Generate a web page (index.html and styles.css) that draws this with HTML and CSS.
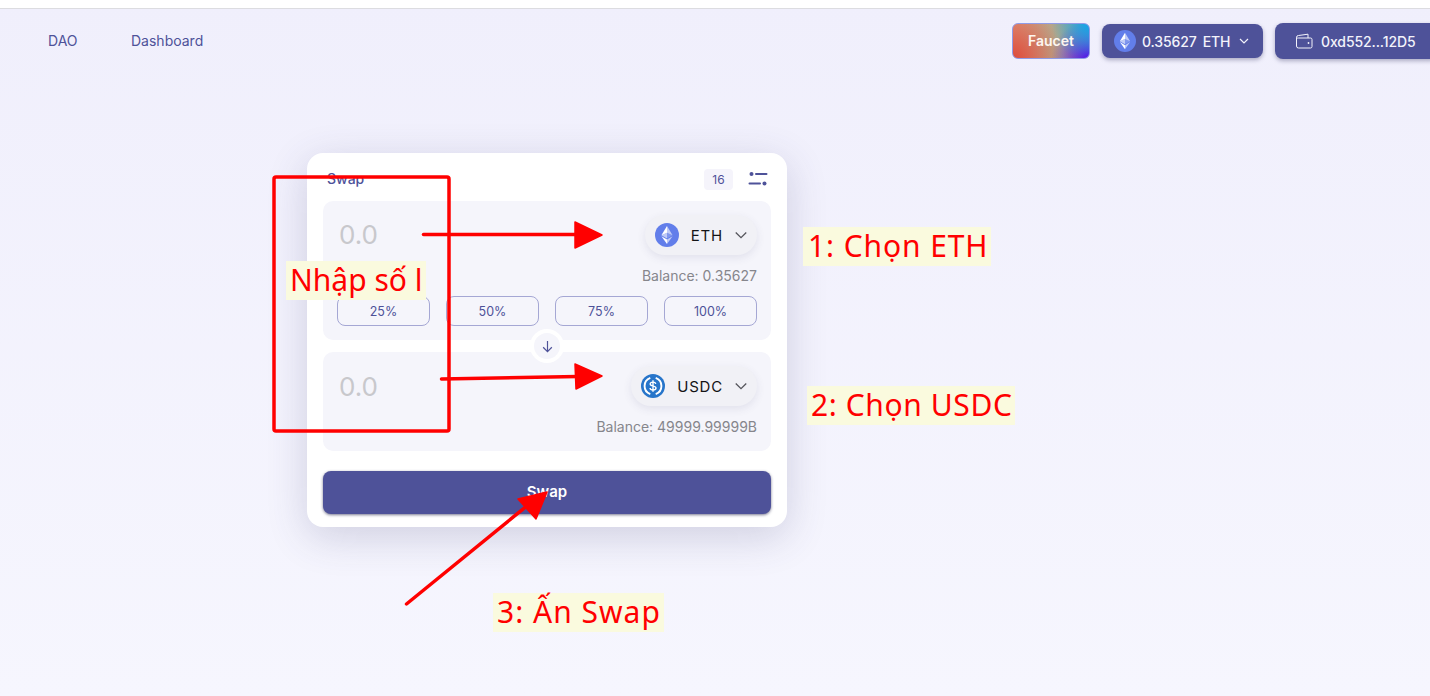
FILE: index.html
```html
<!DOCTYPE html>
<html lang="vi">
<head>
  <meta charset="UTF-8">
  <meta name="viewport" content="width=device-width, initial-scale=1.0">
  <title>Swap</title>
  <link rel="stylesheet" href="styles.css">
</head>
<body>
  <div class="top-strip"></div>
  <header class="topbar">
    <nav class="nav-links">
      <a href="#">DAO</a>
      <a href="#">Dashboard</a>
    </nav>
    <div class="nav-actions">
      <button class="faucet-btn">Faucet</button>
      <button class="balance-btn">
        <svg class="token-icon-sm" viewBox="0 0 24 24"><circle cx="12" cy="12" r="12" fill="#627eea"/><path d="M12 3v6.700l5.600 2.500z" fill="#fff" fill-opacity=".6"/><path d="M12 3L6.400 12.200l5.600-2.500z" fill="#fff"/><path d="M12 16.600V21l5.600-7.800z" fill="#fff" fill-opacity=".6"/><path d="M12 16.600V21l-5.600-7.800z" fill="#fff"/><path d="M12 15.600l5.600-3.400L12 9.700z" fill="#fff" fill-opacity=".2"/><path d="M6.400 12.200l5.600 3.400V9.700z" fill="#fff" fill-opacity=".6"/></svg>
        <span>0.35627</span><span>ETH</span>
        <svg class="chev" viewBox="0 0 12 12"><path d="M2 4l4 4 4-4" fill="none" stroke="currentColor" stroke-width="1.200"/></svg>
      </button>
      <button class="wallet-btn">
        <svg class="wallet-icon" viewBox="0 0 18 16"><path d="M1.500 4.500V13a2 2 0 0 0 2 2h12a1.500 1.500 0 0 0 1.500-1.500v-7A1.500 1.500 0 0 0 15.500 5H3.500a2 2 0 0 1-2-.5zm0 0A2 2 0 0 1 3.500 2.500L13 1.200V5" fill="none" stroke="currentColor" stroke-width="1"/><circle cx="13.500" cy="10" r=".9" fill="currentColor"/></svg>
        <span>0xd552...12D5</span>
      </button>
    </div>
  </header>

  <main class="swap-card">
    <div class="card-head">
      <span class="card-title">Swap</span>
      <div class="card-tools">
        <span class="slippage">16</span>
        <svg class="settings-icon" viewBox="0 0 20 16"><circle cx="3.500" cy="3" r="2" fill="currentColor"/><path d="M8 3h10.500M1.500 12.500H12" stroke="currentColor" stroke-width="2" stroke-linecap="round"/><circle cx="16.500" cy="12.500" r="2" fill="currentColor"/></svg>
      </div>
    </div>

    <section class="panel panel-from">
      <div class="panel-row">
        <span class="amount">0.0</span>
        <button class="token-btn token-eth">
          <svg class="token-icon" viewBox="0 0 24 24"><circle cx="12" cy="12" r="12" fill="#627eea"/><path d="M12 3v6.700l5.600 2.500z" fill="#fff" fill-opacity=".6"/><path d="M12 3L6.400 12.200l5.600-2.500z" fill="#fff"/><path d="M12 16.600V21l5.600-7.800z" fill="#fff" fill-opacity=".6"/><path d="M12 16.600V21l-5.600-7.800z" fill="#fff"/><path d="M12 15.600l5.600-3.400L12 9.700z" fill="#fff" fill-opacity=".2"/><path d="M6.400 12.200l5.600 3.400V9.700z" fill="#fff" fill-opacity=".6"/></svg>
          <span>ETH</span>
          <svg class="chev" viewBox="0 0 12 12"><path d="M1.500 3.800L6 8.300l4.500-4.500" fill="none" stroke="currentColor" stroke-width="1.100"/></svg>
        </button>
      </div>
      <p class="balance">Balance: 0.35627</p>
      <div class="percent-row">
        <button>25%</button>
        <button>50%</button>
        <button>75%</button>
        <button>100%</button>
      </div>
    </section>

    <div class="flip-wrap">
      <span class="flip-btn">
        <svg viewBox="0 0 12 12"><path d="M6 1v9.500M2 6.700l4 4 4-4" fill="none" stroke="currentColor" stroke-width="1.100"/></svg>
      </span>
    </div>

    <section class="panel panel-to">
      <div class="panel-row">
        <span class="amount">0.0</span>
        <button class="token-btn token-usdc">
          <svg class="token-icon" viewBox="0 0 24 24"><circle cx="12" cy="12" r="12" fill="#2775ca"/><path d="M9.300 3.900a8.600 8.600 0 0 0 0 16.200M14.700 3.900a8.600 8.600 0 0 1 0 16.200" fill="none" stroke="#fff" stroke-width="1.900"/><path d="M14.800 9.900c-.3-1.200-1.300-1.800-2.800-1.800-1.600 0-2.800.8-2.800 2 0 2.900 5.800 1.300 5.800 3.900 0 1.200-1.300 2-3 2s-2.800-.7-3-2M12 6.300v11.400" fill="none" stroke="#fff" stroke-width="1.400"/></svg>
          <span>USDC</span>
          <svg class="chev" viewBox="0 0 12 12"><path d="M1.500 3.800L6 8.300l4.500-4.500" fill="none" stroke="currentColor" stroke-width="1.100"/></svg>
        </button>
      </div>
      <p class="balance">Balance: 49999.99999B</p>
    </section>

    <button class="swap-btn">Swap</button>
  </main>

  <!-- red notes drawn on top of the screenshot -->
  <svg class="marks" viewBox="0 0 1430 696">
    <rect x="274" y="177" width="175" height="254" rx="2" fill="none" stroke="#f00" stroke-width="3.500"/>
    <path d="M423.500 234.500H578" stroke="#f00" stroke-width="3.500" stroke-linecap="round"/>
    <path d="M575 222l27 13-27 13z" fill="#f00" stroke="#f00" stroke-width="1.500" stroke-linejoin="round"/>
    <path d="M441.500 379L578 376.500" stroke="#f00" stroke-width="3.500" stroke-linecap="round"/>
    <path d="M575 364l27 12-26 13z" fill="#f00" stroke="#f00" stroke-width="1.500" stroke-linejoin="round"/>
    <path d="M406.500 604L528 505" stroke="#f00" stroke-width="3.500" stroke-linecap="round"/>
    <path d="M547 492l-11 27-18-20z" fill="#f00" stroke="#f00" stroke-width="1.500" stroke-linejoin="round"/>
  </svg>
  <span class="note note-amount">Nhập số l</span>
  <span class="note note-eth">1: Chọn ETH</span>
  <span class="note note-usdc">2: Chọn USDC</span>
  <span class="note note-swap">3: Ấn Swap</span>
</body>
</html>
```
FILE: styles.css
```css
* {
  box-sizing: border-box;
}
html, body {
  height: 100%;
}
body {
  margin: 0;
  position: relative;
  overflow: hidden;
  font-family: Inter, 'Noto Sans', sans-serif;
  background: linear-gradient(to bottom, #f0effc, #f6f6fe);
  color: #4e5299;
}
button {
  font-family: inherit;
  border: none;
  cursor: pointer;
}
.top-strip {
  height: 9px;
  background: #fff;
  border-bottom: 1px solid #dcdce0;
}
.topbar {
  display: flex;
  align-items: center;
  justify-content: space-between;
  height: 36px;
  margin: 14px -8px 0 0;
  padding-left: 48px;
}
.nav-links {
  display: flex;
  gap: 53.500px;
  padding-bottom: 2px;
}
.nav-links a {
  font-size: 14px;
  color: #4e5299;
  text-decoration: none;
}
.nav-actions {
  display: flex;
  align-items: center;
  gap: 12px;
}
.faucet-btn {
  width: 78px;
  height: 36px;
  padding-bottom: 2px;
  border-radius: 6px;
  border: 1px solid #8f9be8;
  color: #fdf6f0;
  font-size: 14px;
  font-weight: 600;
  background:
    radial-gradient(circle at 100% 0, #0ea5ea 0, rgba(14,165,234,0) 45%),
    radial-gradient(circle at 100% 100%, #5a00ea 0, rgba(90,0,234,0) 45%),
    radial-gradient(circle at 0 100%, #dd4c3c 0, rgba(221,76,60,0) 60%),
    linear-gradient(90deg, #df9478, #b0a88c 60%, #8fa7a0);
}
.balance-btn, .wallet-btn {
  display: flex;
  align-items: center;
  background: #4e5299;
  color: #f3f3fb;
  font-size: 14px;
  font-weight: 500;
  border-radius: 8px;
  box-shadow: 0 2px 4px rgba(40,40,90,0.35);
}
.balance-btn {
  width: 161px;
  height: 34px;
  padding: 0 0 0 12px;
  gap: 6px;
}
.balance-btn span, .wallet-btn span {
  letter-spacing: -0.1px;
}
.token-icon-sm {
  width: 22px;
  height: 22px;
}
.balance-btn .chev {
  width: 12px;
  height: 12px;
  margin-left: 2px;
}
.wallet-btn {
  width: 163px;
  height: 36px;
  padding: 0 0 0 20px;
  gap: 8px;
}
.wallet-icon {
  width: 18px;
  height: 16px;
}
.swap-card {
  width: 480px;
  height: 374px;
  margin: 94px 0 0 307px;
  padding: 16px;
  background: #fff;
  border-radius: 16px;
  box-shadow: 0 10px 40px rgba(60,60,110,0.2);
}
.card-head {
  display: flex;
  align-items: center;
  justify-content: space-between;
  height: 20px;
  margin-bottom: 12px;
}
.card-title {
  margin-left: 4px;
  margin-top: -1px;
  font-size: 14px;
  font-weight: 500;
  color: #4e5299;
}
.card-tools {
  display: flex;
  align-items: center;
  gap: 15px;
}
.slippage {
  width: 29px;
  height: 21px;
  line-height: 21px;
  text-align: center;
  font-size: 12px;
  background: #f5f4fb;
  border-radius: 4px;
}
.settings-icon {
  width: 20px;
  height: 16px;
  margin-right: 3px;
}
.panel {
  background: #f5f5fb;
  border-radius: 10px;
  padding: 14px 14px 0 16px;
}
.panel-from {
  height: 139px;
}
.panel-to {
  height: 99px;
}
.panel-row {
  display: flex;
  align-items: center;
  justify-content: space-between;
  height: 40px;
}
.amount {
  font-size: 26px;
  color: #c8c8cc;
}
.panel-from .amount {
  padding-bottom: 2px;
}
.token-btn {
  display: flex;
  align-items: center;
  height: 40px;
  padding: 0 9px 0 10px;
  border-radius: 20px;
  background: #f1f1f6;
  box-shadow: 0 3px 8px rgba(60,60,110,0.1);
  color: #141416;
  font-size: 15px;
  letter-spacing: 0.800px;
}
.token-icon {
  width: 24px;
  height: 24px;
  margin-right: 12px;
}
.token-btn .chev {
  width: 14px;
  height: 14px;
  margin-left: 11px;
  color: #55555c;
}
.balance {
  margin: 13px 0 0;
  text-align: right;
  font-size: 14px;
  line-height: 16px;
  color: #86868c;
}
.percent-row {
  display: grid;
  grid-template-columns: repeat(4, 93px);
  gap: 16px;
  margin-top: 12px;
  margin-left: -2px;
}
.percent-row button {
  height: 30px;
  background: transparent;
  border: 1px solid #a5a7d4;
  border-radius: 8px;
  color: #4e5299;
  font-size: 12.500px;
}
.flip-wrap {
  position: relative;
  height: 12px;
}
.flip-btn {
  position: absolute;
  left: 207px;
  top: -11px;
  width: 34px;
  height: 34px;
  display: flex;
  align-items: center;
  justify-content: center;
  background: #f5f5fb;
  border: 4px solid #fff;
  border-radius: 50%;
}
.flip-btn svg {
  width: 13px;
  height: 13px;
}
.swap-btn {
  display: block;
  width: 448px;
  height: 43px;
  margin-top: 20px;
  padding-bottom: 4px;
  background: #4e5299;
  color: #fff;
  font-size: 15px;
  font-weight: 600;
  border-radius: 8px;
  box-shadow: 0 1px 3px rgba(30,30,70,0.6);
}
.marks {
  position: absolute;
  left: 0;
  top: 0;
  width: 1430px;
  height: 696px;
}
.note {
  position: absolute;
  font-family: 'Noto Sans', sans-serif;
  font-size: 30px;
  line-height: 37px;
  color: #f00;
  background: #fafade;
  padding: 0 3px 2px 4px;
  white-space: nowrap;
}
.note-amount { left: 286px; top: 261px; padding-right: 4px; }
.note-eth { left: 803px; top: 227px; padding-left: 5px; letter-spacing: 0.900px; }
.note-usdc { left: 807px; top: 386px; letter-spacing: 0.600px; }
.note-swap { left: 493px; top: 593px; letter-spacing: 1px; }
```
